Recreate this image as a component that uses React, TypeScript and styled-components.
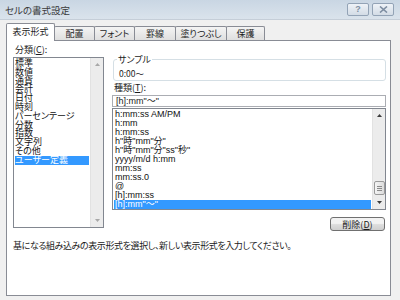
import React from 'react';
import styled, { createGlobalStyle } from 'styled-components';

const GlobalStyle = createGlobalStyle`
  html, body {
    margin: 0;
    padding: 0;
    background: #f0f0f0;
  }
  body {
    width: 400px;
    height: 300px;
    overflow: hidden;
  }
`;

const jpFont = `"Noto Sans CJK JP", "Liberation Sans", sans-serif`;
const latinFont = `"Liberation Sans", "Noto Sans CJK JP", sans-serif`;

const categories = [
  '標準',
  '数値',
  '通貨',
  '会計',
  '日付',
  '時刻',
  'パーセンテージ',
  '分数',
  '指数',
  '文字列',
  'その他',
  'ユーザー定義',
];

const formats = [
  'h:mm:ss AM/PM',
  'h:mm',
  'h:mm:ss',
  'h"時"mm"分"',
  'h"時"mm"分"ss"秒"',
  'yyyy/m/d h:mm',
  'mm:ss',
  'mm:ss.0',
  '@',
  '[h]:mm:ss',
  '[h]:mm"～"',
];

const tabs = [
  { label: '表示形式', width: 49 },
  { label: '配置', width: 41 },
  { label: 'フォント', width: 41 },
  { label: '罫線', width: 42 },
  { label: '塗りつぶし', width: 52 },
  { label: '保護', width: 39 },
];

const Window = styled.div`
  width: 400px;
  height: 300px;
  display: flex;
  flex-direction: column;
  background: #f0f0f0;
  font-family: ${jpFont};
  font-feature-settings: 'palt';
  font-size: 9px;
  color: #1b1b1b;
  box-sizing: border-box;
`;

const TitleBar = styled.div`
  height: 19px;
  flex-shrink: 0;
  display: flex;
  align-items: center;
  padding: 0 6px 0 5px;
  background: linear-gradient(#c9d6e3, #dae3ec);
  border-bottom: 1px solid #c5ced8;
`;

const Title = styled.div`
  flex: 1;
  font-size: 9.5px;
  line-height: 12px;
  color: #3a3a3a;
`;

const CaptionButton = styled.div`
  width: 22px;
  height: 13px;
  margin-left: 3px;
  box-sizing: border-box;
  border: 1px solid #93a3b6;
  border-radius: 2px;
  background: linear-gradient(#eef2f7, #d3dce6);
  display: flex;
  align-items: center;
  justify-content: center;
  color: #7d8da1;
  font-family: ${latinFont};
  font-weight: bold;
  font-size: 9px;
  line-height: 9px;
`;

const Body = styled.div`
  flex: 1;
  display: flex;
  flex-direction: column;
  padding: 3px 9px 4px 6px;
  min-height: 0;
`;

const TabStrip = styled.div`
  height: 17px;
  display: flex;
  align-items: flex-end;
  flex-shrink: 0;
`;

const Tab = styled.div<{ $width: number; $active?: boolean }>`
  width: ${({ $width }) => $width}px;
  height: ${({ $active }) => ($active ? 18 : 14)}px;
  margin-bottom: ${({ $active }) => ($active ? -1 : 0)}px;
  margin-left: -1px;
  box-sizing: border-box;
  border: 1px solid #898c95;
  border-bottom: none;
  border-radius: 2px 2px 0 0;
  background: ${({ $active }) => ($active ? '#ffffff' : 'linear-gradient(#f4f4f4, #dfdfdf)')};
  position: relative;
  z-index: ${({ $active }) => ($active ? 2 : 1)};
  display: flex;
  align-items: center;
  justify-content: center;
  padding-bottom: ${({ $active }) => ($active ? 2 : 0)}px;
  font-size: 9px;
  line-height: 11px;
  color: #1e1e1e;

  &:first-child {
    margin-left: 0;
  }
`;

const Panel = styled.div`
  flex: 1;
  background: #ffffff;
  border: 1px solid #898c95;
  padding: 3px 3px 0 6px;
  display: grid;
  grid-template-columns: 91px 274px;
  grid-template-rows: auto auto;
  column-gap: 8px;
  align-content: start;
`;

const Column = styled.div`
  display: flex;
  flex-direction: column;
`;

const FieldLabel = styled.div`
  font-size: 9px;
  line-height: 11px;
  padding-left: 2px;
  margin-bottom: 2px;

  u {
    text-decoration: underline;
  }
`;

const ListBox = styled.div<{ $height: number }>`
  height: ${({ $height }) => $height}px;
  box-sizing: border-box;
  border: 1px solid #828790;
  display: flex;
  background: #ffffff;
`;

const Rows = styled.div`
  flex: 1;
  padding: 1px 1px 0 1px;
  overflow: hidden;
`;

const CategoryRow = styled.div<{ $selected?: boolean }>`
  height: 8.8px;
  line-height: 8.8px;
  font-size: 9px;
  white-space: nowrap;
  background: ${({ $selected }) => ($selected ? '#3399ff' : 'transparent')};
  color: ${({ $selected }) => ($selected ? '#ffffff' : '#111111')};
`;

const FormatRow = styled.div<{ $selected?: boolean }>`
  height: 9px;
  line-height: 9px;
  font-size: 9px;
  padding-left: 1px;
  font-family: ${latinFont};
  white-space: nowrap;
  background: ${({ $selected }) => ($selected ? '#3399ff' : 'transparent')};
  color: ${({ $selected }) => ($selected ? '#ffffff' : '#111111')};
`;

const ScrollBar = styled.div<{ $width: number }>`
  width: ${({ $width }) => $width}px;
  flex-shrink: 0;
  background: #ececec;
  border-left: 1px solid #e2e2e2;
  display: flex;
  flex-direction: column;
`;

const ArrowCell = styled.div`
  height: 13px;
  display: flex;
  align-items: center;
  justify-content: center;
  flex-shrink: 0;
`;

const Track = styled.div`
  flex: 1;
  display: flex;
  flex-direction: column;
  justify-content: flex-end;
  align-items: center;
`;

const Thumb = styled.div`
  width: 11px;
  height: 14px;
  margin-bottom: 1px;
  box-sizing: border-box;
  border: 1px solid #9a9a9a;
  border-radius: 2px;
  background: linear-gradient(90deg, #f5f5f5, #dcdcdc);
  display: flex;
  flex-direction: column;
  align-items: center;
  justify-content: center;
  gap: 1px;

  span {
    width: 5px;
    height: 1px;
    background: #8a8a8a;
  }
`;

const GroupBox = styled.fieldset`
  margin: 10px 0 0 1px;
  padding: 0 4px 1px 3px;
  border: 1px solid #d5dfe5;
  border-radius: 3px;
  min-width: 0;
`;

const Legend = styled.legend`
  padding: 0 1px;
  font-size: 9px;
  line-height: 11px;
`;

const SampleText = styled.div`
  margin-top: 3px;
  padding-left: 2px;
  font-size: 8.5px;
  line-height: 11px;
  color: #222222;
`;

const TypeLabel = styled(FieldLabel)`
  margin-top: 1px;
  margin-bottom: 2px;
`;

const TextInput = styled.div`
  height: 12px;
  box-sizing: border-box;
  border: 1px solid #abadb3;
  padding-left: 3px;
  font-family: ${latinFont};
  font-size: 9px;
  line-height: 10px;
  margin-bottom: 1px;
  white-space: nowrap;
`;

const Button = styled.div`
  align-self: flex-end;
  width: 55px;
  height: 14px;
  margin: 7px 1px 0 0;
  box-sizing: border-box;
  border: 1px solid #707070;
  border-radius: 3px;
  background: linear-gradient(#f2f2f2 45%, #dddddd 55%, #cfcfcf);
  display: flex;
  align-items: center;
  justify-content: center;
  font-size: 9px;
  line-height: 11px;
`;

const Description = styled.div`
  grid-column: 1 / span 2;
  margin-top: 9px;
  font-size: 9px;
  line-height: 11px;
  letter-spacing: -0.4px;
  white-space: nowrap;
`;

const Arrow: React.FC<{ up?: boolean; color: string }> = ({ up, color }) => (
  <svg width="5" height="3" viewBox="0 0 5 3">
    <path d={up ? 'M0 3 L2.5 0 L5 3 Z' : 'M0 0 L2.5 3 L5 0 Z'} fill={color} />
  </svg>
);

export default function App() {
  return (
    <>
      <GlobalStyle />
      <Window>
        <TitleBar>
          <Title>セルの書式設定</Title>
          <CaptionButton>?</CaptionButton>
          <CaptionButton>
            <svg width="9" height="7" viewBox="0 0 9 7">
              <path d="M1 0.5 L8 6.5 M8 0.5 L1 6.5" stroke="#7d8da1" strokeWidth="1.6" />
            </svg>
          </CaptionButton>
        </TitleBar>
        <Body>
          <TabStrip>
            {tabs.map((t, i) => (
              <Tab key={t.label} $width={t.width} $active={i === 0}>
                {t.label}
              </Tab>
            ))}
          </TabStrip>
          <Panel>
            <Column>
              <FieldLabel>
                分類(<u>C</u>):
              </FieldLabel>
              <ListBox $height={171}>
                <Rows>
                  {categories.map((c) => (
                    <CategoryRow key={c} $selected={c === 'ユーザー定義'}>
                      {c}
                    </CategoryRow>
                  ))}
                </Rows>
                <ScrollBar $width={12}>
                  <ArrowCell>
                    <Arrow up color="#a8a8a8" />
                  </ArrowCell>
                  <Track />
                  <ArrowCell>
                    <Arrow color="#a8a8a8" />
                  </ArrowCell>
                </ScrollBar>
              </ListBox>
            </Column>
            <Column>
              <GroupBox>
                <Legend>サンプル</Legend>
                <SampleText>0:00～</SampleText>
              </GroupBox>
              <TypeLabel>
                種類(<u>T</u>):
              </TypeLabel>
              <TextInput>[h]:mm"～"</TextInput>
              <ListBox $height={102}>
                <Rows>
                  {formats.map((f, i) => (
                    <FormatRow key={f} $selected={i === formats.length - 1}>
                      {f}
                    </FormatRow>
                  ))}
                </Rows>
                <ScrollBar $width={12}>
                  <ArrowCell>
                    <Arrow up color="#3c3c3c" />
                  </ArrowCell>
                  <Track>
                    <Thumb>
                      <span />
                      <span />
                      <span />
                    </Thumb>
                  </Track>
                  <ArrowCell>
                    <Arrow color="#3c3c3c" />
                  </ArrowCell>
                </ScrollBar>
              </ListBox>
              <Button>
                削除(<u>D</u>)
              </Button>
            </Column>
            <Description>
              基になる組み込みの表示形式を選択し、新しい表示形式を入力してください。
            </Description>
          </Panel>
        </Body>
      </Window>
    </>
  );
}
